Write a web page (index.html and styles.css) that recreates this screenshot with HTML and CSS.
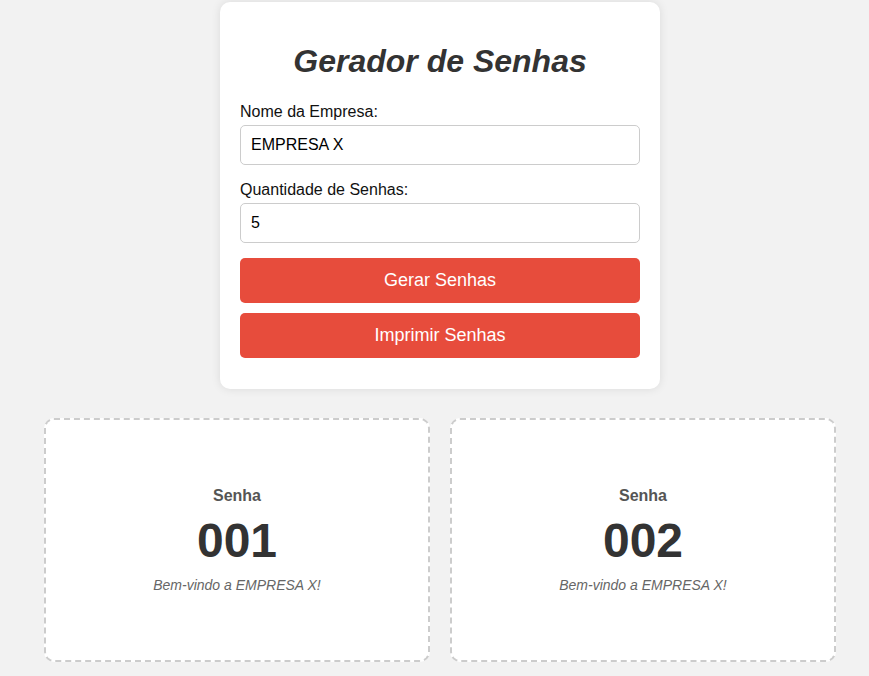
FILE: index.html
```html
<!DOCTYPE html>
<html lang="pt-BR">
  <head>
    <meta charset="UTF-8" />
    <title>Gerador de Senhas</title>
    <link rel="stylesheet" href="styles.css">
  </head>
  <body>
    <div class="page">
      <div class="container">
        <h1>Gerador de Senhas</h1>
        <label for="empresa">Nome da Empresa:</label>
        <input type="text" id="empresa" value="EMPRESA X" />
        <label for="quantidade">Quantidade de Senhas:</label>
        <input type="number" id="quantidade" value="5" />
        <button>Gerar Senhas</button>
        <button>Imprimir Senhas</button>
      </div>

      <!-- Senhas geradas -->
      <div class="senhas">
        <div class="senha">
          <div class="senha-titulo">Senha</div>
          <div class="senha-numero">001</div>
          <div class="senha-msg">Bem-vindo a EMPRESA X!</div>
        </div>
        <div class="senha">
          <div class="senha-titulo">Senha</div>
          <div class="senha-numero">002</div>
          <div class="senha-msg">Bem-vindo a EMPRESA X!</div>
        </div>
      </div>
    </div>
  </body>
</html>
```

FILE: styles.css
```css
body {
  font-family: "Liberation Sans", Arial, sans-serif;
  background: #f2f2f2;
  margin: 0;
  padding: 0;
}

.page {
  width: 792px;
  margin-left: 44px;
  padding-top: 2px;
}

.container {
  width: 400px;
  margin: 0 auto;
  background: white;
  padding: 20px 20px 21px;
  border-radius: 10px;
  box-shadow: 0 0 10px rgba(0, 0, 0, 0.1);
}

h1 {
  text-align: center;
  font-size: 32px;
  font-style: italic;
  color: #333;
  margin: 21px 0 23px;
}

label {
  display: block;
  font-size: 16px;
  color: #111;
  margin-bottom: 4px;
}

input {
  display: block;
  box-sizing: border-box;
  width: 100%;
  padding: 10px;
  font-family: inherit;
  font-size: 16px;
  border: 1px solid #ccc;
  border-radius: 5px;
  margin-bottom: 16px;
}

input[type="number"] {
  margin-bottom: 15px;
}

button {
  display: block;
  width: 100%;
  padding: 12px;
  font-family: inherit;
  font-size: 18px;
  color: white;
  background-color: #e74c3c;
  border: none;
  border-radius: 5px;
  margin-bottom: 10px;
  cursor: pointer;
}

.senhas {
  display: grid;
  grid-template-columns: 1fr 1fr;
  gap: 20px;
  margin-top: 29px;
}

.senha {
  height: 240px;
  background: white;
  border: 2px dashed #ccc;
  border-radius: 10px;
  display: flex;
  flex-direction: column;
  justify-content: center;
  align-items: center;
  text-align: center;
}

.senha-titulo {
  font-size: 16px;
  font-weight: bold;
  color: #555;
}

.senha-numero {
  font-size: 48px;
  font-weight: bold;
  color: #333;
  margin: 8px 0 9px;
}

.senha-msg {
  font-size: 14px;
  font-style: italic;
  color: #666;
}
```
